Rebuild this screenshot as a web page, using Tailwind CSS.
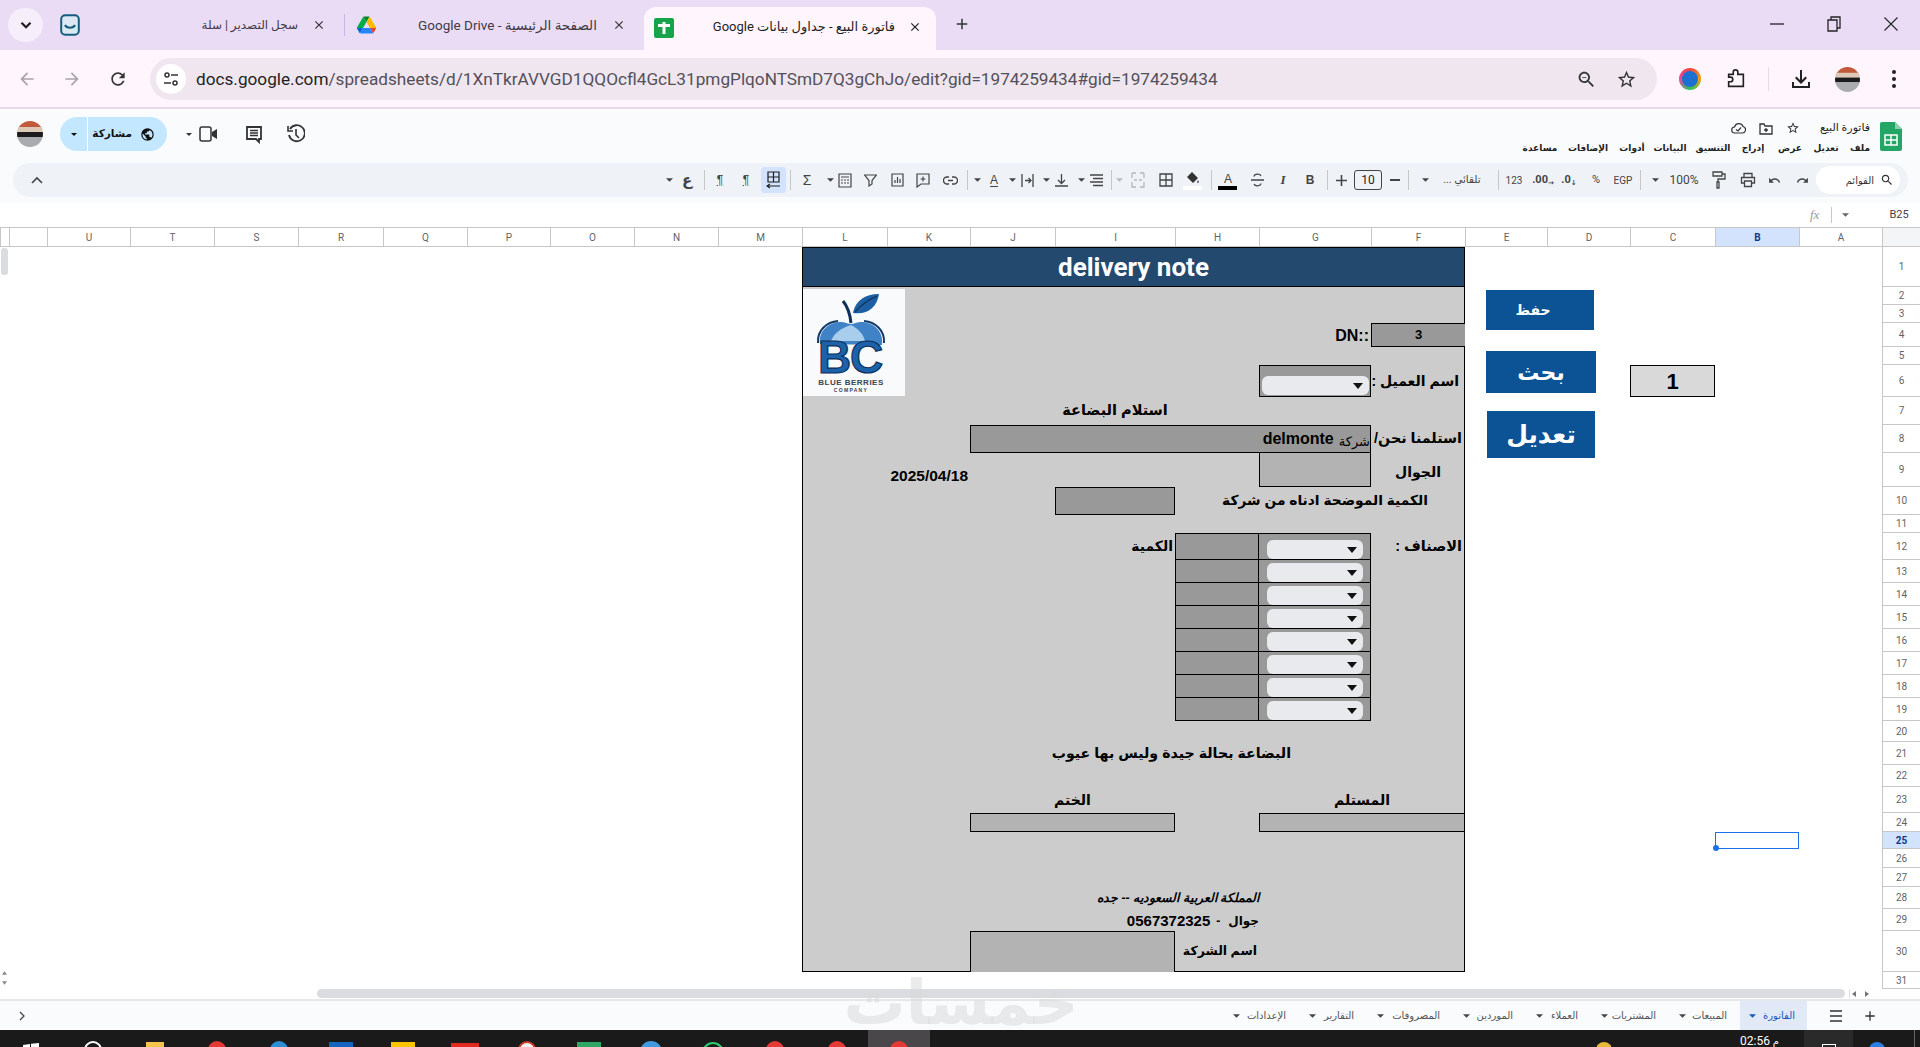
<!doctype html>
<html lang="ar">
<head>
<meta charset="utf-8">
<title>فاتورة البيع</title>
<script src="https://cdn.jsdelivr.net/npm/@tailwindcss/browser@4"></script>
</head>
<body class="m-0 bg-white">
<div class="relative w-[1920px] h-[1047px] overflow-hidden flex flex-col bg-white text-[#1f1f1f] font-['Roboto','DejaVu_Sans',sans-serif]">

<!-- tab strip -->
<div class="h-[50px] flex-none flex items-end bg-[#ebdcf5] pl-[8px] text-[#3f3a44] text-[13px]">
  <div class="self-start mt-[8px] w-[35px] h-[34px] rounded-full bg-[#f6eefb] flex items-center justify-center">
    <svg class="w-[18px] h-[18px]" viewBox="0 0 24 24"><path d="M6 9l6 6 6-6" fill="none" stroke="#1f1f1f" stroke-width="3"/></svg>
  </div>
  <div class="self-start mt-[14px] ml-[17px] w-[20px] h-[22px]">
    <svg class="w-[20px] h-[22px]" viewBox="0 0 20 22"><rect x="1.2" y="1.2" width="17.6" height="19.6" rx="4" fill="#dbe9f2" stroke="#175d80" stroke-width="2"/><path d="M5 11c1.5 3.5 8.500 3.500 10 0" fill="none" stroke="#175d80" stroke-width="2"/></svg>
  </div>
  <div class="self-start mt-[14px] w-[264px] h-[22px] flex items-center justify-end pr-[18px]">
    <span dir="rtl" class="whitespace-nowrap text-[12px]">سجل التصدير | سلة</span>
    <svg class="ml-[14px] w-[14px] h-[14px] flex-none" viewBox="0 0 24 24"><path fill="#333" d="M19 6.410 17.590 5 12 10.590 6.410 5 5 6.410 10.590 12 5 17.590 6.410 19 12 13.410 17.590 19 19 17.590 13.410 12z"/></svg>
  </div>
  <div class="self-start mt-[14px] w-[1px] h-[22px] bg-[#c9b6e8]"></div>
  <div class="self-start mt-[14px] w-[299px] h-[22px] flex items-center pl-[12px]">
    <svg class="w-[19px] h-[18px] flex-none" viewBox="0 0 87.300 78"><path d="M6.600 66.850l3.850 6.650c.8 1.400 1.950 2.500 3.300 3.300L27.500 53H0c0 1.550.4 3.100 1.200 4.500z" fill="#0066da"/><path d="M43.650 25L29.900 1.200c-1.350.8-2.500 1.900-3.300 3.300L1.200 48.500A9 9 0 000 53h27.500z" fill="#00ac47"/><path d="M73.550 76.800c1.350-.8 2.500-1.900 3.300-3.300l1.600-2.750 7.650-13.250c.8-1.400 1.200-2.950 1.200-4.500H59.800l5.850 11.500z" fill="#ea4335"/><path d="M43.650 25L57.400 1.200C56.050.4 54.500 0 52.900 0H34.400c-1.600 0-3.150.45-4.500 1.200z" fill="#00832d"/><path d="M59.800 53H27.500L13.750 76.800c1.350.8 2.900 1.200 4.500 1.200h50.800c1.600 0 3.150-.45 4.500-1.200z" fill="#2684fc"/><path d="M73.400 26.500L60.700 4.500c-.8-1.400-1.950-2.500-3.300-3.300L43.650 25 59.800 53h27.450c0-1.550-.4-3.100-1.200-4.500z" fill="#ffba00"/></svg>
    <span dir="rtl" class="ml-[40px] w-[181px] flex justify-start whitespace-nowrap flex-none text-[13.500px]">الصفحة الرئيسية - Google Drive</span>
    <svg class="ml-[15px] w-[14px] h-[14px] flex-none" viewBox="0 0 24 24"><path fill="#333" d="M19 6.410 17.590 5 12 10.590 6.410 5 5 6.410 10.590 12 5 17.590 6.410 19 12 13.410 17.590 19 19 17.590 13.410 12z"/></svg>
  </div>
  <div class="h-[43px] w-[292px] rounded-t-[12px] bg-[#fff5fd] flex items-center pl-[10px] pb-[1px] text-[#1f1f1f]">
    <div class="w-[20px] h-[20px] bg-[#16a34a] rounded-[2px] flex-none flex items-center justify-center">
      <svg class="w-[14px] h-[14px]" viewBox="0 0 14 14"><path d="M1 4.500h12M7 1v12" stroke="#fff" stroke-width="3"/></svg>
    </div>
    <span dir="rtl" class="ml-[36px] w-[185px] text-right whitespace-nowrap flex-none -mt-[3px]">فاتورة البيع - جداول بيانات Google</span>
    <svg class="ml-[13px] w-[14px] h-[14px] flex-none -mt-[2px]" viewBox="0 0 24 24"><path fill="#1f1f1f" d="M19 6.410 17.590 5 12 10.590 6.410 5 5 6.410 10.590 12 5 17.590 6.410 19 12 13.410 17.590 19 19 17.590 13.410 12z"/></svg>
  </div>
  <div class="self-start mt-[15px] ml-[17px]">
    <svg class="w-[18px] h-[18px]" viewBox="0 0 24 24"><path fill="#333" d="M19 13h-6v6h-2v-6H5v-2h6V5h2v6h6z"/></svg>
  </div>
  <div class="self-start ml-auto flex items-center h-[48px] pr-[22px] gap-[43px]">
    <svg class="w-[14px] h-[14px]" viewBox="0 0 14 14"><path d="M0 7h14" stroke="#222" stroke-width="1.300"/></svg>
    <svg class="w-[14px] h-[16px]" viewBox="0 0 14 16"><path d="M1 4h9v11H1zM4 4V1h9v11h-3" fill="none" stroke="#222" stroke-width="1.300"/></svg>
    <svg class="w-[14px] h-[14px]" viewBox="0 0 14 14"><path d="M.5.500l13 13M13.500.500l-13 13" stroke="#222" stroke-width="1.100"/></svg>
  </div>
</div>

<!-- address row -->
<div class="h-[59px] flex-none flex items-center bg-[#fff5fd] border-b-2 border-[#e6dae8] pl-[17px] pr-[17px] pt-[1px]">
  <svg class="w-[20px] h-[20px] flex-none" viewBox="0 0 24 24"><path fill="#a9a3ab" d="M20 11H7.830l5.590-5.590L12 4l-8 8 8 8 1.410-1.410L7.830 13H20z"/></svg>
  <svg class="ml-[25px] w-[20px] h-[20px] flex-none" viewBox="0 0 24 24"><path fill="#a9a3ab" d="M12 4l-1.410 1.410L16.170 11H4v2h12.170l-5.580 5.590L12 20l8-8z"/></svg>
  <svg class="ml-[26px] w-[20px] h-[20px] flex-none" viewBox="0 0 24 24"><path fill="#333" d="M17.650 6.350C16.200 4.900 14.210 4 12 4c-4.420 0-7.990 3.580-7.990 8s3.570 8 7.990 8c3.730 0 6.840-2.550 7.730-6h-2.080c-.82 2.330-3.040 4-5.650 4-3.310 0-6-2.690-6-6s2.690-6 6-6c1.660 0 3.140.69 4.220 1.780L13 11h7V4l-2.350 2.350z"/></svg>
  <div class="ml-[22px] w-[1507px] h-[42px] flex-none rounded-full bg-[#efe6ef] flex items-center pl-[6px] pr-[20px]">
    <div class="w-[30px] h-[30px] rounded-full bg-white flex items-center justify-center flex-none">
      <svg class="w-[16px] h-[16px]" viewBox="0 0 16 16"><g fill="none" stroke="#333" stroke-width="1.500"><circle cx="4" cy="4" r="2"/><path d="M8 4h7M1 12h7"/><circle cx="12" cy="12" r="2"/></g></svg>
    </div>
    <span class="ml-[10px] mt-[2px] text-[17.200px] whitespace-nowrap text-[#54505a]"><span class="text-[#1f1f1f]">docs.google.com</span>/spreadsheets/d/1XnTkrAVVGD1QQOcfl4GcL31pmgPlqoNTSmD7Q3gChJo/edit?gid=1974259434#gid=1974259434</span>
    <svg class="ml-auto w-[21px] h-[21px] flex-none" viewBox="0 0 24 24"><path fill="#333" d="M15.500 14h-.79l-.28-.27C15.410 12.590 16 11.110 16 9.500 16 5.910 13.090 3 9.500 3S3 5.910 3 9.500 5.910 16 9.500 16c1.610 0 3.090-.59 4.230-1.570l.27.28v.79l5 4.990L20.490 19l-4.990-5zm-6 0C7.010 14 5 11.990 5 9.500S7.010 5 9.500 5 14 7.010 14 9.500 11.990 14 9.500 14zM7 9h5v1H7z"/></svg>
    <svg class="ml-[19px] w-[21px] h-[21px] flex-none" viewBox="0 0 24 24"><path fill="#333" d="M22 9.240l-7.190-.62L12 2 9.190 8.630 2 9.240l5.460 4.730L5.820 21 12 17.270 18.180 21l-1.630-7.030L22 9.240zM12 15.400l-3.760 2.270 1-4.280-3.320-2.880 4.380-.38L12 6.100l1.710 4.040 4.380.38-3.320 2.880 1 4.280L12 15.400z"/></svg>
  </div>
  <div class="ml-[22px] w-[22px] h-[22px] flex-none rounded-full bg-[conic-gradient(#ef4444,#f59e0b,#22c55e,#ec4899,#ef4444)] flex items-center justify-center">
    <div class="w-[16px] h-[16px] rounded-full bg-[#1d6fd1]"></div>
  </div>
  <svg class="ml-[24px] w-[22px] h-[22px] flex-none" viewBox="0 0 24 24"><path d="M4 7h5V4.500a2.500 2.500 0 015 0V7h6v13H4v-5h2a2.500 2.500 0 000-5H4z" fill="none" stroke="#222" stroke-width="1.800"/></svg>
  <div class="ml-[21px] w-[1px] h-[24px] bg-[#e6dae8] flex-none"></div>
  <svg class="ml-[20px] w-[24px] h-[24px] flex-none" viewBox="0 0 24 24"><path fill="#222" d="M11 3h2v10l3.500-3.500L18 11l-6 6-6-6 1.500-1.500L11 13zM3 15h2v4h14v-4h2v6H3z"/></svg>
  <svg class="ml-[22px] w-[25px] h-[25px] flex-none" viewBox="0 0 26 26"><defs><clipPath id="av1"><circle cx="13" cy="13" r="13"/></clipPath></defs><g clip-path="url(#av1)"><rect width="26" height="9" fill="#c05a3a"/><rect y="6" width="26" height="6" fill="#dcc9b8"/><rect y="11" width="26" height="5" fill="#1c1c1f"/><rect y="16" width="26" height="10" fill="#a9abb0"/></g></svg>
  <svg class="ml-[32px] w-[4px] h-[18px] flex-none" viewBox="0 0 4 18"><circle cx="2" cy="2" r="2" fill="#222"/><circle cx="2" cy="9" r="2" fill="#222"/><circle cx="2" cy="16" r="2" fill="#222"/></svg>
</div>

<!-- sheets app header -->
<div class="h-[118px] flex-none bg-[#f9fbfd] flex flex-col">
  <div class="h-[54px] flex-none flex">
    <div class="flex items-center h-[50px] pl-[17px]">
      <svg class="w-[26px] h-[26px] flex-none" viewBox="0 0 26 26"><defs><clipPath id="av2"><circle cx="13" cy="13" r="13"/></clipPath></defs><g clip-path="url(#av2)"><rect width="26" height="9" fill="#c05a3a"/><rect y="6" width="26" height="6" fill="#dcc9b8"/><rect y="11" width="26" height="5" fill="#1c1c1f"/><rect y="16" width="26" height="10" fill="#a9abb0"/></g></svg>
      <div class="ml-[17px] w-[107px] h-[34px] rounded-full bg-[#c2e7ff] flex items-center flex-none">
        <div class="w-[28px] h-full flex items-center justify-center border-r border-white"><svg class="w-[6px] h-[3px]" viewBox="0 0 8 4"><path d="M0 0h8L4 4z" fill="#111"/></svg></div>
        <span dir="rtl" class="ml-[8px] w-[36px] text-center text-[10.500px] font-bold whitespace-nowrap text-[#111]">مشاركة</span>
        <svg class="ml-[8px] w-[15px] h-[15px] flex-none" viewBox="0 0 24 24"><path fill="#111" d="M12 2a10 10 0 100 20 10 10 0 000-20zm-1 17.900A8 8 0 014 12c0-.6.1-1.200.2-1.800L9 15v1a2 2 0 002 2zm6.900-2.500A2 2 0 0016 16h-1v-3a1 1 0 00-1-1H8v-2h2a1 1 0 001-1V7h2a2 2 0 002-2v-.4a8 8 0 012.900 12.800z"/></svg>
      </div>
      <svg class="ml-[19px] w-[6px] h-[3px] flex-none" viewBox="0 0 8 4"><path d="M0 0h8L4 4z" fill="#333"/></svg>
      <svg class="ml-[7px] w-[19px] h-[16px] flex-none" viewBox="0 0 19 16"><rect x="1" y="1" width="11" height="14" rx="2" fill="none" stroke="#333" stroke-width="1.500"/><path d="M13 6l5-3v10l-5-3z" fill="#333"/></svg>
      <svg class="ml-[27px] w-[18px] h-[19px] flex-none" viewBox="0 0 18 19"><path d="M2 2h14v12h-2v3l-3-3H2z" fill="none" stroke="#333" stroke-width="1.800"/><path d="M5 5.500h8M5 8h8M5 10.500h8" stroke="#333" stroke-width="1.300"/></svg>
      <svg class="ml-[24px] w-[18px] h-[20px] flex-none" viewBox="0 0 18 20"><path d="M3 5a8 8 0 11-1 6" fill="none" stroke="#333" stroke-width="1.800"/><path d="M9 5v6l3 3M1 2v5h5" fill="none" stroke="#333" stroke-width="1.600"/></svg>
    </div>
    <div dir="rtl" class="ml-auto flex pr-[18px] pt-[13px]">
      <svg class="w-[22px] h-[29px] flex-none" viewBox="0 0 22 29"><path d="M1.500 0H15l7 7v20a2 2 0 01-2 2H2a2 2 0 01-2-2V2a2 2 0 011.500-2z" fill="#22a565"/><path d="M15 0l7 7h-7z" fill="#8ed1b1"/><path d="M5 13h12v10H5zM5 18h12M11 13v10" fill="none" stroke="#fff" stroke-width="1.500"/></svg>
      <div class="mr-[10px] -mt-[3px] flex flex-col">
        <div class="h-[18px] flex items-center">
          <span class="text-[11px] whitespace-nowrap w-[53px]">فاتورة البيع</span>
          <svg class="mr-[17px] w-[14px] h-[14px]" viewBox="0 0 24 24"><path fill="#333" d="M22 9.240l-7.190-.62L12 2 9.190 8.630 2 9.240l5.460 4.730L5.820 21 12 17.270 18.180 21l-1.630-7.030L22 9.240zM12 15.400l-3.760 2.270 1-4.280-3.320-2.880 4.380-.38L12 6.100l1.710 4.040 4.380.38-3.320 2.880 1 4.280L12 15.400z"/></svg>
          <svg class="mr-[13px] w-[14px] h-[13px]" viewBox="0 0 14 13"><path d="M1 2h4l1 2h7v8H1zM7 6v4M5 8h4" fill="none" stroke="#333" stroke-width="1.300"/></svg>
          <svg class="mr-[13px] w-[15px] h-[12px]" viewBox="0 0 15 12"><path d="M4 11a3 3 0 01-.5-6A4.500 4.500 0 0112 4.500 3.300 3.300 0 0111.500 11zM5 7.500l2 1.500 3-3.500" fill="none" stroke="#333" stroke-width="1.200"/></svg>
        </div>
        <div class="mt-[3px] h-[18px] flex items-center text-[9px] font-bold text-[#222] *:flex *:justify-center *:whitespace-nowrap">
          <span class="w-[20px]">ملف</span><span class="w-[48px]">تعديل</span><span class="w-[24px]">عرض</span><span class="w-[50px]">إدراج</span><span class="w-[30px]">التنسيق</span><span class="w-[56px]">البيانات</span><span class="w-[20px]">أدوات</span><span class="w-[68px]">الإضافات</span><span class="w-[28px]">مساعدة</span>
        </div>
      </div>
    </div>
  </div>

  <!-- toolbar -->
  <div dir="rtl" class="ml-[13px] w-[1895px] h-[34px] flex-none rounded-full bg-[#eff3f8] flex items-center pr-[8px] text-[#444] text-[11px] *:flex-none *:flex *:items-center *:justify-center">
    <div class="w-[84px] h-[28px] rounded-full bg-white ml-[6px] pr-[6px] gap-[6px] !justify-start">
      <svg class="w-[14px] h-[14px]" viewBox="0 0 24 24"><path fill="#333" d="M15.500 14h-.79l-.28-.27C15.410 12.590 16 11.110 16 9.500 16 5.910 13.090 3 9.500 3S3 5.910 3 9.500 5.910 16 9.500 16c1.610 0 3.090-.59 4.230-1.570l.27.28v.79l5 4.990L20.490 19l-4.990-5zm-6 0C7.010 14 5 11.990 5 9.500S7.010 5 9.500 5 14 7.010 14 9.500 11.990 14 9.500 14z"/></svg>
      <span class="text-[10px] whitespace-nowrap text-[#333]">القوائم</span>
    </div>
    <div class="w-[16px] ml-[12px]"><svg class="w-[13px] h-[13px]" viewBox="0 0 24 24"><path fill="#444" d="M18.400 10.600C16.550 8.990 14.150 8 11.500 8c-4.650 0-8.580 3.030-9.960 7.220L3.900 16c1.050-3.190 4.050-5.500 7.600-5.500 1.950 0 3.730.72 5.120 1.880L13 16h9V7l-3.600 3.600z"/></svg></div>
    <div class="w-[16px] ml-[10px]"><svg class="w-[13px] h-[13px]" viewBox="0 0 24 24"><path fill="#444" d="M12.500 8c-2.650 0-5.050.99-6.900 2.600L2 7v9h9l-3.620-3.620c1.390-1.160 3.160-1.880 5.120-1.880 3.540 0 6.550 2.310 7.600 5.500l2.370-.78C21.080 11.030 17.150 8 12.500 8z"/></svg></div>
    <div class="w-[16px] ml-[13px]"><svg class="w-[16px] h-[16px]" viewBox="0 0 16 16"><path d="M4 5V1.500h8V5M4 11H1.500V5.500h13V11H12M4.500 9h7v5.500h-7z" fill="none" stroke="#444" stroke-width="1.300"/></svg></div>
    <div class="w-[16px] ml-[12px]"><svg class="w-[14px] h-[18px]" viewBox="0 0 14 18"><path d="M1 1h9v4H1zM10 3h3v5H6v3M5 11h2v6H5z" fill="none" stroke="#444" stroke-width="1.300"/></svg></div>
    <div dir="ltr" class="w-[30px] ml-[10px] text-[12px]">100%</div>
    <div class="w-[8px] ml-[10px]"><svg class="w-[7px] h-[4px]" viewBox="0 0 8 4"><path d="M0 0h8L4 4z" fill="#444"/></svg></div>
    <div class="w-[1px] h-[20px] bg-[#c7c7c7] ml-[5px]"></div>
    <div dir="ltr" class="w-[24px] ml-[8px] text-[10px]">EGP</div>
    <div class="w-[14px] ml-[12px] text-[11px]">%</div>
    <div dir="ltr" class="w-[16px] ml-[8px] text-[11px] font-bold">.0<span class="text-[7px] self-end">↓</span></div>
    <div dir="ltr" class="w-[20px] ml-[9px] text-[11px] font-bold">.00<span class="text-[7px] self-end">→</span></div>
    <div dir="ltr" class="w-[20px] ml-[5px] text-[10px]">123</div>
    <div class="w-[1px] h-[20px] bg-[#c7c7c7] ml-[15px]"></div>
    <div class="w-[42px] ml-[12px] text-[10.500px] whitespace-nowrap">تلقائي ...</div>
    <div class="w-[8px] ml-[12px]"><svg class="w-[7px] h-[4px]" viewBox="0 0 8 4"><path d="M0 0h8L4 4z" fill="#444"/></svg></div>
    <div class="w-[1px] h-[20px] bg-[#c7c7c7] ml-[7px]"></div>
    <div class="w-[12px] ml-[7px]"><svg class="w-[10px] h-[2px]" viewBox="0 0 10 2"><rect width="10" height="2" fill="#444"/></svg></div>
    <div class="w-[28px] h-[20px] rounded-[3px] border border-[#444] ml-[7px] text-[12px] text-[#222]">10</div>
    <div class="w-[12px] ml-[7px]"><svg class="w-[11px] h-[11px]" viewBox="0 0 11 11"><path d="M0 5.500h11M5.500 0v11" stroke="#444" stroke-width="1.600"/></svg></div>
    <div class="w-[1px] h-[20px] bg-[#c7c7c7] ml-[10px]"></div>
    <div class="w-[14px] ml-[13px] text-[12px] font-bold font-['Liberation_Sans']">B</div>
    <div class="w-[14px] ml-[11px] text-[13px] italic font-bold font-['Liberation_Serif']">I</div>
    <div class="w-[16px] ml-[13px]"><svg class="w-[13px] h-[14px]" viewBox="0 0 13 14"><path d="M0 7h13M10 3C9 .5 3.500.5 3 3.500M3 11c1 2.500 6.500 2.500 7-.5" fill="none" stroke="#444" stroke-width="1.300"/></svg></div>
    <div class="w-[16px] ml-[8px] relative h-[20px]"><span class="text-[12px] font-['Liberation_Sans'] -mt-[3px]">A</span><span class="absolute bottom-0 left-[-2px] w-[19px] h-[4px] bg-black"></span></div>
    <div class="w-[1px] h-[20px] bg-[#c7c7c7] ml-[10px]"></div>
    <div class="w-[16px] ml-[11px] relative h-[20px]"><svg class="-mt-[5px] w-[14px] h-[13px]" viewBox="0 0 14 13"><path d="M6 1l6 6-5 5-6-6zM12 9c-1 2-1 3 0 3s1-1 0-3z" fill="#333"/></svg><span class="absolute bottom-0 left-[-2px] w-[19px] h-[4px] bg-white"></span></div>
    <div class="w-[16px] ml-[12px]"><svg class="w-[14px] h-[14px]" viewBox="0 0 14 14"><path d="M1 1h12v12H1zM7 1v12M1 7h12" fill="none" stroke="#444" stroke-width="1.300"/></svg></div>
    <div class="w-[16px] ml-[7px]"><svg class="w-[14px] h-[16px]" viewBox="0 0 14 16"><path d="M1 1h4M9 1h4M1 1v5M13 1v5M1 10v5h4M13 10v5H9M3 8h3M11 8H8" fill="none" stroke="#b5b8bc" stroke-width="1.300"/></svg></div>
    <div class="w-[8px] ml-[3px]"><svg class="w-[7px] h-[4px]" viewBox="0 0 8 4"><path d="M0 0h8L4 4z" fill="#b5b8bc"/></svg></div>
    <div class="w-[1px] h-[20px] bg-[#c7c7c7] ml-[8px]"></div>
    <div class="w-[14px] ml-[4px]"><svg class="w-[13px] h-[13px]" viewBox="0 0 13 13"><path d="M0 1h13M3 4.500h10M0 8h13M3 11.500h10" stroke="#444" stroke-width="1.300"/></svg></div>
    <div class="w-[8px] ml-[9px]"><svg class="w-[7px] h-[4px]" viewBox="0 0 8 4"><path d="M0 0h8L4 4z" fill="#444"/></svg></div>
    <div class="w-[14px] ml-[4px]"><svg class="w-[13px] h-[14px]" viewBox="0 0 13 14"><path d="M0 13h13M6.500 1v9M3 7l3.500 3.500L10 7" fill="none" stroke="#444" stroke-width="1.300"/></svg></div>
    <div class="w-[8px] ml-[8px]"><svg class="w-[7px] h-[4px]" viewBox="0 0 8 4"><path d="M0 0h8L4 4z" fill="#444"/></svg></div>
    <div class="w-[14px] ml-[4px]"><svg class="w-[13px] h-[13px]" viewBox="0 0 13 13"><path d="M1 0v13M12 0v13M4 6.500h6M7.500 4L10 6.500 7.500 9" fill="none" stroke="#444" stroke-width="1.300"/></svg></div>
    <div class="w-[8px] ml-[7px]"><svg class="w-[7px] h-[4px]" viewBox="0 0 8 4"><path d="M0 0h8L4 4z" fill="#444"/></svg></div>
    <div class="w-[14px] ml-[6px] relative"><span class="text-[12px] font-['Liberation_Sans'] border-b border-[#444] leading-[12px]">A</span></div>
    <div class="w-[8px] ml-[5px]"><svg class="w-[7px] h-[4px]" viewBox="0 0 8 4"><path d="M0 0h8L4 4z" fill="#444"/></svg></div>
    <div class="w-[1px] h-[20px] bg-[#c7c7c7] ml-[9px]"></div>
    <div class="w-[16px] ml-[11px]"><svg class="w-[15px] h-[9px]" viewBox="0 0 15 9"><path d="M6 1H4a3.500 3.500 0 000 7h2M9 1h2a3.500 3.500 0 010 7H9M5 4.500h5" fill="none" stroke="#444" stroke-width="1.300"/></svg></div>
    <div class="w-[16px] ml-[10px]"><svg class="w-[14px] h-[15px]" viewBox="0 0 14 15"><path d="M1 1h12v10H5l-4 3zM7 3.500v5M4.500 6h5" fill="none" stroke="#444" stroke-width="1.200"/></svg></div>
    <div class="w-[16px] ml-[11px]"><svg class="w-[13px] h-[14px]" viewBox="0 0 13 14"><path d="M1 1h11v12H1zM4 10V7M6.500 10V4M9 10V6" fill="none" stroke="#444" stroke-width="1.200"/></svg></div>
    <div class="w-[16px] ml-[9px]"><svg class="w-[13px] h-[13px]" viewBox="0 0 13 13"><path d="M.5 1h12L8 6.500V10l-3 2V6.500z" fill="none" stroke="#444" stroke-width="1.200"/></svg></div>
    <div class="w-[16px] ml-[3px]"><svg class="w-[14px] h-[15px]" viewBox="0 0 14 15"><path d="M1 1h12v13H1zM3 4h8M3 7h2M6 7h2M9 7h2M3 10h2M6 10h2M9 10h2" fill="none" stroke="#444" stroke-width="1.200"/></svg></div>
    <div class="w-[8px] ml-[12px]"><svg class="w-[7px] h-[4px]" viewBox="0 0 8 4"><path d="M0 0h8L4 4z" fill="#444"/></svg></div>
    <div class="w-[14px] ml-[9px] text-[14px] font-['Liberation_Sans']">Σ</div>
    <div class="w-[1px] h-[20px] bg-[#c7c7c7] ml-[4px]"></div>
    <div class="w-[25px] h-[26px] rounded-[3px] bg-[#d3e3fd] ml-[8px]"><svg class="w-[15px] h-[18px]" viewBox="0 0 15 18"><path d="M2 1h11v10H2zM7.500 1v10M2 6h11M1 15h13M4 13l-3 2 3 2" fill="none" stroke="#1f1f1f" stroke-width="1.200"/></svg></div>
    <div class="w-[14px] ml-[12px] text-[12px] underline font-['Liberation_Sans']">¶</div>
    <div class="w-[14px] ml-[8px] text-[12px] underline font-['Liberation_Sans']">¶</div>
    <div class="w-[1px] h-[20px] bg-[#c7c7c7] ml-[10px]"></div>
    <div class="w-[14px] ml-[7px] text-[15px] font-bold font-['DejaVu_Sans']">ع</div>
    <div class="w-[8px]"><svg class="w-[7px] h-[4px]" viewBox="0 0 8 4"><path d="M0 0h8L4 4z" fill="#444"/></svg></div>
    <div class="w-[16px] mr-auto ml-[16px]"><svg class="w-[12px] h-[8px]" viewBox="0 0 12 8"><path d="M1 7l5-5 5 5" fill="none" stroke="#444" stroke-width="1.600"/></svg></div>
  </div>

  <!-- formula bar -->
  <div dir="rtl" class="mt-[6px] h-[24px] flex-none bg-white flex items-center pr-[10px] text-[#444]">
    <span class="w-[22px] text-[11px] text-center flex-none">B25</span>
    <svg class="mr-[39px] w-[7px] h-[4px] flex-none" viewBox="0 0 8 4"><path d="M0 0h8L4 4z" fill="#666"/></svg>
    <div class="mr-[10px] w-[1px] h-[16px] bg-[#c7c7c7] flex-none"></div>
    <span dir="ltr" class="mr-[7px] w-[14px] text-[13px] italic text-[#999] font-['Liberation_Serif'] flex-none">fx</span>
  </div>
</div>

<!-- spreadsheet grid: columns run right to left -->
<div dir="rtl" class="relative h-[762px] flex-none overflow-hidden bg-white grid grid-cols-[38px_83px_84px_85px_83px_82px_94px_112px_84px_120px_85px_83px_85px_84px_84px_84px_83px_84px_85px_84px_84px_83px_38px_9px] grid-rows-[20px_40px_18px_18px_24px_18px_32px_28px_28px_34px_28px_18px_27px_23px_23px_23px_23px_23px_23px_23px_21px_23px_22px_26px_19px_17px_19px_19px_22px_22px_41px_17px] text-black text-[14.500px] font-bold font-['Liberation_Sans','DejaVu_Sans',sans-serif]">

  <!-- column headers -->
  <div class="col-[1/-1] row-[1] grid grid-cols-subgrid text-[10px] font-normal text-[#5f6368] font-['Roboto',sans-serif] border-y border-[#c7c7c7] *:flex *:items-center *:justify-center *:border-l *:border-[#c7c7c7]">
    <div class="border-l-[3px] bg-[#f4f5f6]"></div>
    <div>A</div><div class="bg-[#d3e3fd] font-bold text-[#0b3a8a]">B</div><div>C</div><div>D</div><div>E</div><div>F</div><div>G</div><div>H</div><div>I</div><div>J</div><div>K</div><div>L</div><div>M</div><div>N</div><div>O</div><div>P</div><div>Q</div><div>R</div><div>S</div><div>T</div><div>U</div><div></div><div></div>
  </div>

  <!-- row headers -->
  <div class="col-[1] row-[2/33] grid grid-rows-subgrid text-[10px] font-normal text-[#5f6368] font-['Roboto',sans-serif] border-l border-[#c7c7c7] *:flex *:items-center *:justify-center *:border-b *:border-[#c7c7c7]">
    <div>1</div><div>2</div><div>3</div><div>4</div><div>5</div><div>6</div><div>7</div><div>8</div><div>9</div><div>10</div><div>11</div><div>12</div><div>13</div><div>14</div><div>15</div><div>16</div><div>17</div><div>18</div><div>19</div><div>20</div><div>21</div><div>22</div><div>23</div><div>24</div><div class="bg-[#d3e3fd] font-bold text-[#0b3a8a]">25</div><div>26</div><div>27</div><div>28</div><div>29</div><div>30</div><div>31</div>
  </div>

  <!-- left vertical scrollbar -->
  <div class="col-[24] row-[2/33] flex flex-col items-center justify-between py-[1px]">
    <div class="w-[7px] h-[27px] rounded-[3px] bg-[#dadce0]"></div>
    <div class="flex flex-col gap-[6px] mb-[3px]"><svg class="w-[5px] h-[4px]" viewBox="0 0 6 4"><path d="M3 0l3 4H0z" fill="#888"/></svg><svg class="w-[5px] h-[4px]" viewBox="0 0 6 4"><path d="M0 0h6L3 4z" fill="#888"/></svg></div>
  </div>

  <!-- form background -->
  <div class="col-[7/14] row-[2/32] bg-[#cccccc] border border-black"></div>

  <!-- title -->
  <div class="col-[7/14] row-[2] bg-[#23496e] border border-black flex items-center justify-center text-white text-[26px] font-['Roboto',sans-serif]"><span dir="ltr" class="mt-[1px]">delivery note</span></div>

  <!-- logo -->
  <div dir="ltr" class="col-[12/14] row-[3/8] justify-self-end self-start ml-[1px] mt-[2px] w-[102px] h-[107px] bg-[#f8fafc]">
    <svg class="w-[102px] h-[107px]" viewBox="0 0 102 107">
      <path d="M50 24c2-12 12-19 26-19-2 13-11 21-26 19z" fill="#1d5fa3"/>
      <path d="M52 23c6-7 13-12 22-16" stroke="#0f2f57" stroke-width="1.200" fill="none"/>
      <path d="M40 12c5 6 7 13 8 22" stroke="#0f2f57" stroke-width="3" fill="none"/>
      <path d="M17 55c-2-14 10-22 21-22 4 0 7 2 10 2 3 0 6-2 10-2 12 0 23 9 21 23z" fill="#3f83c6"/>
      <path d="M28 52c3-8 10-13 20-16 6 3 12 8 14 16z" fill="#a9cdec"/>
      <path d="M15 54c-1-13 9-21 20-22M81 54c1-13-9-21-20-22" stroke="#123a6a" stroke-width="2" fill="none"/>
      <text x="15" y="84" font-family="Liberation Sans" font-weight="700" font-size="46" fill="#1c62ab" stroke="#0f2f57" stroke-width="1.200">B</text>
      <text x="47" y="84" font-family="Liberation Sans" font-weight="700" font-size="46" fill="#1c62ab" stroke="#0f2f57" stroke-width="1.200">C</text>
      <text x="48" y="96" text-anchor="middle" font-family="Liberation Sans" font-weight="700" font-size="8" fill="#3b4452" letter-spacing=".5">BLUE BERRIES</text>
      <text x="48" y="103" text-anchor="middle" font-family="Liberation Sans" font-weight="700" font-size="5" fill="#3b4452" letter-spacing="1.300">COMPANY</text>
    </svg>
  </div>

  <!-- row 4 -->
  <div class="col-[7] row-[5] bg-[#999999] border border-black border-r-0 flex items-center justify-center text-[13px]">3</div>
  <div class="col-[8] row-[5] flex items-center pr-[2px] pt-[2px] text-[16px]" dir="ltr"><span class="ml-auto">DN::</span></div>

  <!-- row 6 -->
  <div class="col-[7] row-[7] flex items-center pr-[6px] pt-[1px] text-[14px] whitespace-nowrap">اسم العميل :</div>
  <div class="col-[8] row-[7] bg-[#999999] border border-black flex items-end pb-[1px] pr-[1px]"><div class="w-[107px] h-[19px] rounded-[6px] bg-[#e8eaed] flex items-center pr-[6px]"><svg class="w-[10px] h-[6px]" viewBox="0 0 10 6"><path d="M0 0h10L5 6z" fill="#111"/></svg></div></div>
  <div class="col-[4] row-[7] bg-[#d9d9d9] border border-black flex items-center justify-center text-[22px]">1</div>

  <!-- row 7 -->
  <div class="col-[10] row-[8] flex items-center justify-center whitespace-nowrap">استلام البضاعة</div>

  <!-- row 8 -->
  <div class="col-[7] row-[9] flex items-center pr-[3px] text-[14.300px] whitespace-nowrap">استلمنا نحن/</div>
  <div class="col-[8/12] row-[9] bg-[#999999] border border-black flex items-end pb-[1px] whitespace-nowrap"><span class="text-[13px] font-normal">شركة</span><span dir="ltr" class="mr-[5px] text-[16px]">delmonte</span></div>

  <!-- row 9 -->
  <div class="col-[7] row-[10] flex items-start justify-center pt-[9px] text-[14px] whitespace-nowrap">الجوال</div>
  <div class="col-[8] row-[10] bg-[#b3b3b3] border border-black border-t-0"></div>
  <div class="col-[12] row-[10] flex items-center text-[15.500px] pt-[12px] pr-[2px] whitespace-nowrap">2025/04/18</div>

  <!-- row 10 -->
  <div class="col-[7/10] row-[11] flex items-center justify-center pl-[10px] text-[13.800px] whitespace-nowrap">الكمية الموضحة ادناه من شركة</div>
  <div class="col-[10] row-[11] bg-[#999999] border border-black"></div>

  <!-- items -->
  <div class="col-[7] row-[13] flex items-center pr-[3px] whitespace-nowrap">الاصناف :</div>
  <div class="col-[10] row-[13] flex items-center pr-[2px] text-[14px] whitespace-nowrap">الكمية</div>

  <div class="col-[9] row-[13] bg-[#999999] border border-black"></div>
  <div class="col-[9] row-[14] bg-[#999999] border border-black border-t-0"></div>
  <div class="col-[9] row-[15] bg-[#999999] border border-black border-t-0"></div>
  <div class="col-[9] row-[16] bg-[#999999] border border-black border-t-0"></div>
  <div class="col-[9] row-[17] bg-[#999999] border border-black border-t-0"></div>
  <div class="col-[9] row-[18] bg-[#999999] border border-black border-t-0"></div>
  <div class="col-[9] row-[19] bg-[#999999] border border-black border-t-0"></div>
  <div class="col-[9] row-[20] bg-[#999999] border border-black border-t-0"></div>

  <div class="col-[8] row-[13] bg-[#999999] border-y border-r border-black flex items-end justify-center"><div class="w-[96px] h-[19px] rounded-[6px] bg-[#e8eaed] flex items-center pr-[6px]"><svg class="w-[10px] h-[6px]" viewBox="0 0 10 6"><path d="M0 0h10L5 6z" fill="#111"/></svg></div></div>
  <div class="col-[8] row-[14] bg-[#999999] border-b border-r border-black flex items-end justify-center"><div class="w-[96px] h-[19px] rounded-[6px] bg-[#e8eaed] flex items-center pr-[6px]"><svg class="w-[10px] h-[6px]" viewBox="0 0 10 6"><path d="M0 0h10L5 6z" fill="#111"/></svg></div></div>
  <div class="col-[8] row-[15] bg-[#999999] border-b border-r border-black flex items-end justify-center"><div class="w-[96px] h-[19px] rounded-[6px] bg-[#e8eaed] flex items-center pr-[6px]"><svg class="w-[10px] h-[6px]" viewBox="0 0 10 6"><path d="M0 0h10L5 6z" fill="#111"/></svg></div></div>
  <div class="col-[8] row-[16] bg-[#999999] border-b border-r border-black flex items-end justify-center"><div class="w-[96px] h-[19px] rounded-[6px] bg-[#e8eaed] flex items-center pr-[6px]"><svg class="w-[10px] h-[6px]" viewBox="0 0 10 6"><path d="M0 0h10L5 6z" fill="#111"/></svg></div></div>
  <div class="col-[8] row-[17] bg-[#999999] border-b border-r border-black flex items-end justify-center"><div class="w-[96px] h-[19px] rounded-[6px] bg-[#e8eaed] flex items-center pr-[6px]"><svg class="w-[10px] h-[6px]" viewBox="0 0 10 6"><path d="M0 0h10L5 6z" fill="#111"/></svg></div></div>
  <div class="col-[8] row-[18] bg-[#999999] border-b border-r border-black flex items-end justify-center"><div class="w-[96px] h-[19px] rounded-[6px] bg-[#e8eaed] flex items-center pr-[6px]"><svg class="w-[10px] h-[6px]" viewBox="0 0 10 6"><path d="M0 0h10L5 6z" fill="#111"/></svg></div></div>
  <div class="col-[8] row-[19] bg-[#999999] border-b border-r border-black flex items-end justify-center"><div class="w-[96px] h-[19px] rounded-[6px] bg-[#e8eaed] flex items-center pr-[6px]"><svg class="w-[10px] h-[6px]" viewBox="0 0 10 6"><path d="M0 0h10L5 6z" fill="#111"/></svg></div></div>
  <div class="col-[8] row-[20] bg-[#999999] border-b border-r border-black flex items-end justify-center"><div class="w-[96px] h-[19px] rounded-[6px] bg-[#e8eaed] flex items-center pr-[6px]"><svg class="w-[10px] h-[6px]" viewBox="0 0 10 6"><path d="M0 0h10L5 6z" fill="#111"/></svg></div></div>

  <!-- row 21 -->
  <div class="col-[8/12] row-[22] flex items-center pr-[80px] text-[14.200px] whitespace-nowrap">البضاعة بحالة جيدة وليس بها عيوب</div>

  <!-- rows 23-24 -->
  <div class="col-[7/9] row-[24] flex items-center justify-center text-[14px] whitespace-nowrap">المستلم</div>
  <div class="col-[10/12] row-[24] flex items-center justify-center text-[14px] whitespace-nowrap">الختم</div>
  <div class="col-[7/9] row-[25] bg-[#b3b3b3] border border-black"></div>
  <div class="col-[10/12] row-[25] bg-[#b3b3b3] border border-black"></div>

  <!-- rows 28-30 -->
  <div class="col-[9/12] row-[29] flex items-center text-[12.400px] italic whitespace-nowrap">المملكة العربية السعوديه -- جده</div>
  <div class="col-[9/12] row-[30] flex items-center pt-[2px] whitespace-nowrap"><span class="text-[12px]">جوال</span><span class="mr-[8px] text-[12px]">-</span><span dir="ltr" class="mr-[6px] text-[15px]">0567372325</span></div>
  <div class="col-[9] row-[31] flex items-center whitespace-nowrap pr-[2px] text-[12.500px]">اسم الشركة</div>
  <div class="col-[10/12] row-[31] bg-[#b3b3b3] border-x border-t border-black"></div>

  <!-- selected cell B25 -->
  <div class="col-[3] row-[26] border border-[#1a73e8] relative"><span class="absolute left-[-3px] bottom-[-3px] w-[6px] h-[6px] rounded-full bg-[#1a73e8]"></span></div>

  <!-- floating buttons drawn over the sheet -->
  <div class="absolute left-[1486px] top-[63px] w-[108px] h-[40px] bg-[#0b5394] flex items-center justify-center text-white text-[14px] pr-[14px]">حفظ</div>
  <div class="absolute left-[1486px] top-[124px] w-[110px] h-[42px] bg-[#0b5394] flex items-center justify-center text-white text-[22px]">بحث</div>
  <div class="absolute left-[1487px] top-[184px] w-[108px] h-[47px] bg-[#0b5394] flex items-center justify-center text-white text-[25px]">تعديل</div>
</div>

<!-- horizontal scrollbar -->
<div class="h-[12px] flex-none flex border-b-2 border-[#e5e7ea]">
  <div class="ml-[317px] w-[1528px] h-[9px] rounded-full bg-[#dadce0]"></div>
  <div class="ml-[4px] h-[9px] flex items-center gap-[9px] border-l border-[#ddd] pl-[2px]">
    <svg class="w-[4px] h-[6px]" viewBox="0 0 4 6"><path d="M4 0v6L0 3z" fill="#777"/></svg>
    <svg class="w-[4px] h-[6px]" viewBox="0 0 4 6"><path d="M0 0v6l4-3z" fill="#777"/></svg>
  </div>
</div>

<!-- sheet tabs -->
<div dir="rtl" class="h-[29px] flex-none bg-[#f9fbfd] flex items-center pr-[42px] text-[10px] text-[#555]">
  <svg class="w-[16px] h-[16px] flex-none" viewBox="0 0 24 24"><path fill="#333" d="M19 13h-6v6h-2v-6H5v-2h6V5h2v6h6z"/></svg>
  <svg class="mr-[18px] w-[16px] h-[14px] flex-none" viewBox="0 0 16 14"><path d="M2 2h12M2 7h12M2 12h12" stroke="#333" stroke-width="1.500"/></svg>
  <div class="mr-[21px] w-[67px] h-full bg-[#e1e9f7] text-[#1558b8] flex items-center pl-[9px] pr-[12px] justify-between flex-none"><span class="whitespace-nowrap">الفاتورة</span><svg class="w-[7px] h-[4px]" viewBox="0 0 8 4"><path d="M0 0h8L4 4z" fill="#1558b8"/></svg></div>
  <div class="mr-[13px] flex items-center gap-[23px] *:flex *:items-center *:justify-between *:whitespace-nowrap">
    <div class="w-[48px]"><span>المبيعات</span><svg class="w-[7px] h-[4px]" viewBox="0 0 8 4"><path d="M0 0h8L4 4z" fill="#444"/></svg></div>
    <div class="w-[55px]"><span>المشتريات</span><svg class="w-[7px] h-[4px]" viewBox="0 0 8 4"><path d="M0 0h8L4 4z" fill="#444"/></svg></div>
    <div class="w-[42px]"><span>العملاء</span><svg class="w-[7px] h-[4px]" viewBox="0 0 8 4"><path d="M0 0h8L4 4z" fill="#444"/></svg></div>
    <div class="w-[50px]"><span>الموردين</span><svg class="w-[7px] h-[4px]" viewBox="0 0 8 4"><path d="M0 0h8L4 4z" fill="#444"/></svg></div>
    <div class="w-[63px]"><span>المصروفات</span><svg class="w-[7px] h-[4px]" viewBox="0 0 8 4"><path d="M0 0h8L4 4z" fill="#444"/></svg></div>
    <div class="w-[45px]"><span>التقارير</span><svg class="w-[7px] h-[4px]" viewBox="0 0 8 4"><path d="M0 0h8L4 4z" fill="#444"/></svg></div>
    <div class="w-[53px]"><span>الإعدادات</span><svg class="w-[7px] h-[4px]" viewBox="0 0 8 4"><path d="M0 0h8L4 4z" fill="#444"/></svg></div>
  </div>
  <svg class="mr-auto ml-[19px] w-[6px] h-[10px] flex-none" viewBox="0 0 6 10"><path d="M1 1l4 4-4 4" fill="none" stroke="#444" stroke-width="1.300"/></svg>
</div>

<!-- taskbar -->
<div class="h-[17px] flex-none bg-[#1a1a1a] flex overflow-hidden text-white *:flex-none">
  <div class="w-[62px] flex justify-center pt-[12px]"><svg class="w-[16px] h-[16px]" viewBox="0 0 16 16"><path d="M0 3l7-1v6H0zM8 1.800L16 1v7H8z" fill="#fff"/></svg></div>
  <div class="w-[62px] flex justify-center pt-[11px]"><div class="w-[18px] h-[18px] rounded-full border-2 border-white"></div></div>
  <div class="w-[62px] flex justify-center pt-[12px]"><div class="w-[18px] h-[16px] bg-[#f3c34b]"></div></div>
  <div class="w-[62px] flex justify-center pt-[11px]"><div class="w-[18px] h-[18px] rounded-full bg-[#e53935]"></div></div>
  <div class="w-[62px] flex justify-center pt-[11px]"><div class="w-[18px] h-[18px] rounded-full bg-[#2b8fd8]"></div></div>
  <div class="w-[62px] flex justify-center pt-[12px]"><div class="w-[24px] h-[18px] bg-[#1565c0]"></div></div>
  <div class="w-[62px] flex justify-center pt-[12px]"><div class="w-[24px] h-[18px] bg-[#fbc400]"></div></div>
  <div class="w-[62px] flex justify-center pt-[13px]"><div class="w-[28px] h-[18px] bg-[#e02a20]"></div></div>
  <div class="w-[62px] flex justify-center pt-[11px]"><div class="w-[18px] h-[18px] rounded-full bg-[#f4f4f4] border-2 border-[#c83a2a]"></div></div>
  <div class="w-[62px] flex justify-center pt-[12px]"><div class="w-[24px] h-[18px] bg-[#2fa866]"></div></div>
  <div class="w-[62px] flex justify-center pt-[11px]"><div class="w-[22px] h-[22px] rounded-full bg-[#3f9ae0]"></div></div>
  <div class="w-[62px] flex justify-center pt-[12px]"><div class="w-[22px] h-[22px] rounded-full border-2 border-[#2ecc71]"></div></div>
  <div class="w-[62px] flex justify-center pt-[11px]"><div class="w-[18px] h-[18px] rounded-full bg-[#e53935]"></div></div>
  <div class="w-[62px] flex justify-center pt-[11px]"><div class="w-[18px] h-[18px] rounded-full bg-[#e53935]"></div></div>
  <div class="w-[62px] flex justify-center pt-[11px] bg-[#4a474a]"><div class="w-[18px] h-[18px] rounded-full bg-[#e53935]"></div></div>
  <div class="ml-[666px] pt-[12px]"><div class="w-[16px] h-[16px] rounded-full bg-[#e8b93a]"></div></div>
  <div dir="ltr" class="ml-[128px] w-[46px] whitespace-nowrap text-[12px] leading-[12px] pt-[5px] text-white font-['Roboto','DejaVu_Sans',sans-serif]">02:56 <span class="text-[10px]">م</span></div>
  <div class="ml-[18px] w-[49px] bg-[#2a2a2a] flex justify-center pt-[14px]"><div class="w-[14px] h-[10px] border border-white"></div></div>
  <div class="ml-[16px] pt-[12px]"><div class="w-[16px] h-[16px] rounded-full bg-[#2b7fe0]"></div></div>
  <div class="ml-[29px] w-[1px] bg-[#666]"></div>
</div>

<!-- freelancer site watermark laid over the page -->
<div dir="rtl" class="absolute left-[845px] top-[978px] w-[232px] h-[50px] flex items-center justify-center text-[62px] font-bold leading-none whitespace-nowrap text-[#d8d8d8]/50 font-['DejaVu_Sans',sans-serif] pointer-events-none">خمسات</div>
</div>
</body>
</html>
